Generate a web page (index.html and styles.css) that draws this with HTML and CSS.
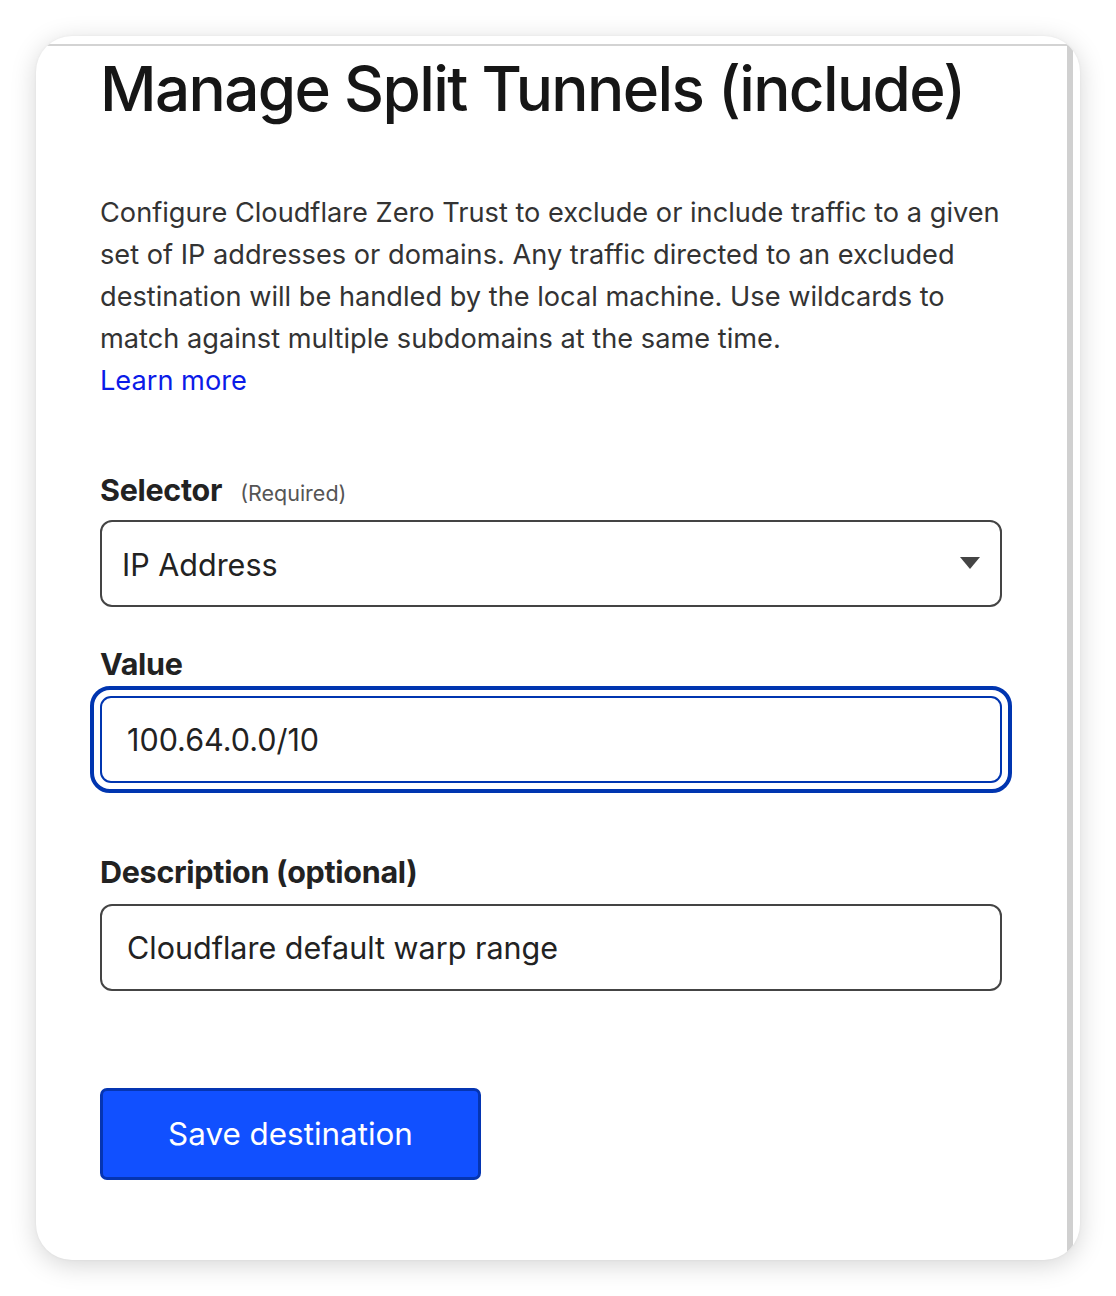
FILE: index.html
```html
<!DOCTYPE html>
<html lang="en">
<head>
<meta charset="utf-8">
<title>Manage Split Tunnels (include)</title>
<link rel="stylesheet" href="styles.css">
</head>
<body>
<div class="page">
  <div class="card">
    <div class="frame">
      <div class="content">
        <h1 class="title">Manage Split Tunnels (include)</h1>
        <p class="intro">Configure Cloudflare Zero Trust to exclude or include traffic to a given set of IP addresses or domains. Any traffic directed to an excluded destination will be handled by the local machine. Use wildcards to match against multiple subdomains at the same time.<br><a class="link" href="#">Learn more</a></p>

        <div class="field field-selector">
          <div class="label-row"><span class="label">Selector</span><span class="req">(Required)</span></div>
          <div class="select">
            <span class="select-text">IP Address</span>
            <svg class="caret" width="20" height="12" viewBox="0 0 20 12"><path d="M0 0 H20 L10 12 Z" fill="#444"/></svg>
          </div>
        </div>

        <div class="field field-value">
          <div class="label-row"><span class="label">Value</span></div>
          <div class="focus-ring">
            <div class="input input-focused">100.64.0.0/10</div>
          </div>
        </div>

        <div class="field field-desc">
          <div class="label-row"><span class="label">Description (optional)</span></div>
          <div class="input">Cloudflare default warp range</div>
        </div>

        <button class="btn" type="button">Save destination</button>
      </div>
    </div>
  </div>
</div>
</body>
</html>
```

FILE: styles.css
```css
* { box-sizing: border-box; }
html, body { margin: 0; padding: 0; background: #ffffff; }
body {
  font-family: Inter, "Noto Sans", "Liberation Sans", sans-serif;
  color: #1a1a1a;
}
.page {
  padding: 36px;
  width: 1116px;
  height: 1296px;
}
.card {
  width: 1044px;
  height: 1224px;
  background: #fff;
  border-radius: 36px;
  overflow: hidden;
  box-shadow: 0 5px 26px rgba(0,0,0,0.17), 0 0 3px rgba(0,0,0,0.05);
}
.frame {
  margin-top: 8px;
  margin-right: 7px;
  height: 1216px;
  border-top: 2px solid #d3d3d3;
  border-right: 6px solid #d0d0d0;
}
.content {
  padding: 7px 0 0 64px;
  width: 966px;
}
.title {
  margin: 0;
  font-size: 62px;
  line-height: 72px;
  font-weight: 500;
  letter-spacing: -1.65px;
  color: #161616;
  white-space: nowrap;
}
.intro {
  margin: 67px -24px 0 0;
  font-size: 27.2px;
  line-height: 42px;
  color: #333;
}
.link {
  color: #0b1be8;
  text-decoration: none;
}
.field-selector { margin-top: 70px; }
.label-row {
  display: flex;
  align-items: baseline;
  gap: 18px;
}
.label {
  font-size: 30.5px;
  font-weight: 700;
  color: #222;
  line-height: 36px;
  letter-spacing: -0.3px;
}
.req {
  font-size: 21.5px;
  color: #555;
}
.select {
  margin-top: 12px;
  height: 87px;
  border: 2px solid #444;
  border-radius: 12px;
  display: flex;
  align-items: center;
  justify-content: space-between;
  padding: 0 20px 0 20px;
  font-size: 30.5px;
  color: #222;
}
.select-text { margin-top: 2px; }
.caret { margin-top: -2px; }
.field-value { margin-top: 39px; }
.focus-ring {
  margin: 4px -10px 0 -10px;
  padding: 6px;
  border: 4px solid #0035b0;
  border-radius: 20px;
}
.input {
  height: 87px;
  border: 2px solid #444;
  border-radius: 12px;
  display: flex;
  align-items: center;
  padding: 0 25px;
  font-size: 30.5px;
  color: #222;
}
.input-focused {
  border-color: #0035b0;
  border-radius: 11px;
}
.field-desc { margin-top: 61px; }
.field-desc .input { margin-top: 14px; }
.btn {
  display: block;
  margin-top: 97px;
  width: 381px;
  height: 92px;
  background: #1150ff;
  border: 3px solid #0535b2;
  border-radius: 7px;
  color: #fff;
  font-family: Inter, "Noto Sans", "Liberation Sans", sans-serif;
  font-size: 31.4px;
  font-weight: 400;
  padding: 0;
}
```
